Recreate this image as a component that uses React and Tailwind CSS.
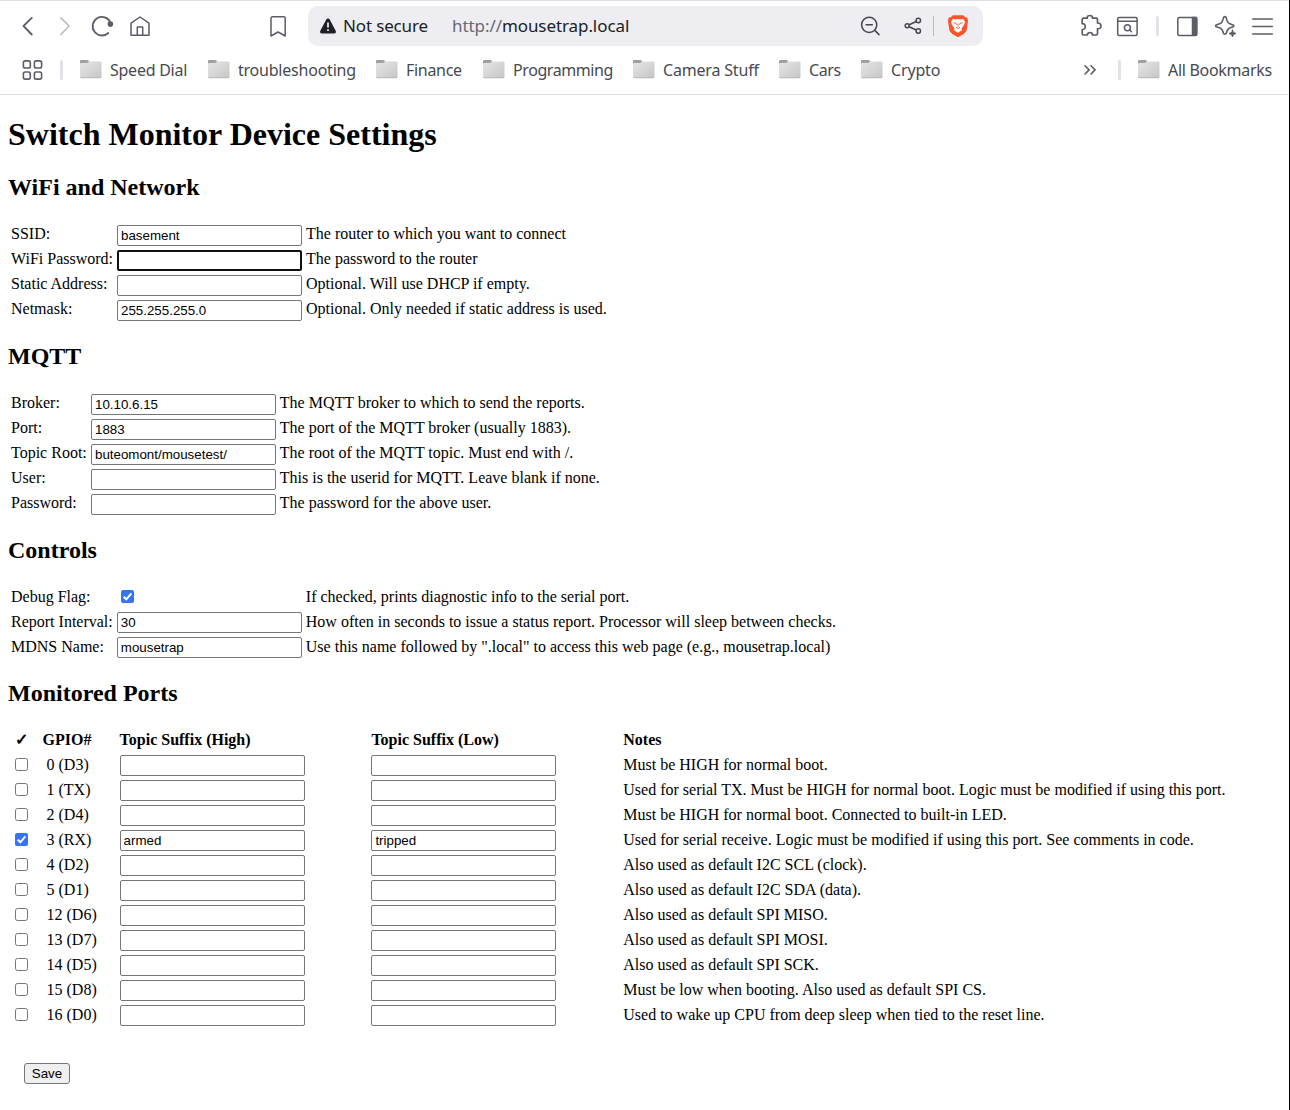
import React from "react";

const inputBase =
  "block h-[21px] w-[185px] rounded-[2px] bg-white font-['Liberation_Sans',Arial,sans-serif] text-[13.333px] text-black outline-none";

function Field({ value = "", focused = false, raised = false, label }) {
  return (
    <input
      aria-label={label}
      defaultValue={value}
      className={`${inputBase} ${raised ? "-mt-px" : ""} ${
        focused
          ? "border-2 border-[#101010] px-[2px] py-0 leading-[17px]"
          : "border border-[#767676] px-[3px] py-0 leading-[19px]"
      }`}
    />
  );
}

function Check({ on = false }) {
  return on ? (
    <svg viewBox="0 0 13 13" className="block size-[13px]">
      <rect width="13" height="13" rx="2" fill="#3574f7" />
      <path d="M2.7 6.7 5.3 9.3 10.4 3.4" fill="none" stroke="#fff" strokeWidth="2" />
    </svg>
  ) : (
    <span className="block size-[13px] rounded-[2.5px] border border-[#767676] bg-white" />
  );
}

function H2({ children }) {
  return <h2 className="h-[51px] text-[24px] leading-[27px] font-bold">{children}</h2>;
}

function Rows({ rows, cols, raised }) {
  return rows.map(([label, value, note, kind]) => (
    <div key={label} className={`grid h-[25px] items-start pl-[3px] whitespace-nowrap ${cols}`}>
      <span>{label}</span>
      {kind === "check" ? (
        <span className="pt-[2px] pl-[4px]"><Check on /></span>
      ) : (
        <Field label={label} value={value} focused={kind === "focus"} raised={raised} />
      )}
      <span>{note}</span>
    </div>
  ));
}

const wifi = [
  ["SSID:", "basement", "The router to which you want to connect"],
  ["WiFi Password:", "", "The password to the router", "focus"],
  ["Static Address:", "", "Optional. Will use DHCP if empty."],
  ["Netmask:", "255.255.255.0", "Optional. Only needed if static address is used."],
];
const mqtt = [
  ["Broker:", "10.10.6.15", "The MQTT broker to which to send the reports."],
  ["Port:", "1883", "The port of the MQTT broker (usually 1883)."],
  ["Topic Root:", "buteomont/mousetest/", "The root of the MQTT topic. Must end with /."],
  ["User:", "", "This is the userid for MQTT. Leave blank if none."],
  ["Password:", "", "The password for the above user."],
];
const controls = [
  ["Debug Flag:", "", "If checked, prints diagnostic info to the serial port.", "check"],
  ["Report Interval:", "30", "How often in seconds to issue a status report. Processor will sleep between checks."],
  ["MDNS Name:", "mousetrap", 'Use this name followed by ".local" to access this web page (e.g., mousetrap.local)'],
];
const ports = [
  ["0 (D3)", "Must be HIGH for normal boot."],
  ["1 (TX)", "Used for serial TX. Must be HIGH for normal boot. Logic must be modified if using this port."],
  ["2 (D4)", "Must be HIGH for normal boot. Connected to built-in LED."],
  ["3 (RX)", "Used for serial receive. Logic must be modified if using this port. See comments in code.", "armed", "tripped"],
  ["4 (D2)", "Also used as default I2C SCL (clock)."],
  ["5 (D1)", "Also used as default I2C SDA (data)."],
  ["12 (D6)", "Also used as default SPI MISO."],
  ["13 (D7)", "Also used as default SPI MOSI."],
  ["14 (D5)", "Also used as default SPI SCK."],
  ["15 (D8)", "Must be low when booting. Also used as default SPI CS."],
  ["16 (D0)", "Used to wake up CPU from deep sleep when tied to the reset line."],
];

function Icon({ className, children, w = 24, h = 24, sw = 1.5, color = "#5b5e66" }) {
  return (
    <svg width={w} height={h} viewBox={`0 0 ${w} ${h}`} fill="none" stroke={color} strokeWidth={sw} strokeLinecap="round" strokeLinejoin="round" className={`block shrink-0 ${className || ""}`}>
      {children}
    </svg>
  );
}

function Folder() {
  return (
    <svg width="24" height="20" viewBox="0 0 24 20" className="mb-[2px] block shrink-0">
      <defs>
        <linearGradient id="folder" x1="0" y1="0" x2="1" y2="1">
          <stop offset="0" stopColor="#e6e6e6" />
          <stop offset="1" stopColor="#c6c6c6" />
        </linearGradient>
      </defs>
      <path d="M1 8V2.2Q1 1 2.2 1H8.5Q9.3 1 9.8 2L10.3 3H20V8Z" fill="#a0a0a0" />
      <path d="M1 5Q1 4 2 4H8L10 2.6H21.5Q22.5 2.6 22.5 3.6V17.5Q22.5 19 21 19H2.5Q1 19 1 17.5Z" fill="url(#folder)" />
      <path d="M1.4 17.9Q1.7 18.8 2.6 18.8H21Q22 18.8 22.2 17.8" fill="none" stroke="#b0b0b0" strokeWidth=".8" />
    </svg>
  );
}

const bookmarks = [
  ["Speed Dial", "w-[128px]", "tracking-[-0.25px]"],
  ["troubleshooting", "w-[168px]", "tracking-[-0.22px]"],
  ["Finance", "w-[107px]", "tracking-[-0.3px]"],
  ["Programming", "w-[150px]", "tracking-[-0.42px]"],
  ["Camera Stuff", "w-[146px]", "tracking-[-0.18px]"],
  ["Cars", "w-[82px]", "tracking-[-0.4px]"],
  ["Crypto", "w-[100px]", "tracking-[-0.15px]"],
];

function Browser() {
  return (
    <header className="h-[95px] border-t border-b border-[#dfdfe4] bg-white font-['Noto_Sans','Open_Sans',sans-serif] whitespace-nowrap">
      <div className="flex h-[50px] items-center">
        <Icon className="ml-[16px]" sw={1.8}><path d="M15.8 3.8 7.5 12 15.8 20.5" /></Icon>
        <Icon className="ml-[13px]" color="#bdbdbd" sw={1.7}><path d="M7.8 3.8 16.1 12 7.8 20.5" /></Icon>
        <Icon className="ml-[13px]" w={26} sw={1.8}>
          <path d="M18.3 19A9.3 9.3 0 1 1 20.4 8.3" />
          <circle cx="20.4" cy="10.1" r="1.9" fill="#5b5e66" />
        </Icon>
        <Icon className="ml-[12px]">
          <path d="M3 9.2 12 3l9 6.2V21.2H3ZM9.3 21V13h5.4V21" />
        </Icon>
        <Icon className="ml-[114px]"><path d="M6.2 2.7H17.7Q19.2 2.7 19.2 4.2V22L12.1 18 5 22V4.2Q5 2.7 6.5 2.7Z" /></Icon>
        <div className="ml-[18px] flex h-[40px] w-[675px] items-center rounded-[10px] bg-[#ededf2] text-[17px]">
          <svg width="18" height="16" viewBox="0 0 18 16" className="ml-[11px] shrink-0">
            <path d="M7.4 1.2Q9 -.4 10.6 1.2L16.8 13Q17.4 15.2 15.4 15.4H2.6Q.6 15.2 1.2 13Z" fill="#202126" />
            <path d="M9 4.5V9.5M9 11.2V13" stroke="#fff" strokeWidth="1.6" />
          </svg>
          <span className="ml-[6px] w-[109px] tracking-[-0.15px] text-[#202126]">Not secure</span>
          <span className="w-[406px] tracking-[-0.08px] text-[#202126]"><span className="text-[#676970]">http://</span>mousetrap.local</span>
          <Icon color="#46484f">
            <circle cx="11.2" cy="10.8" r="7.6" /><path d="m16.8 16.4 4.2 4.2M8.1 10.8h6.2" />
          </Icon>
          <Icon className="ml-[21px]" color="#46484f" w={22}>
            <circle cx="4.2" cy="11.7" r="2" /><circle cx="15.3" cy="6.5" r="2.2" /><circle cx="15.3" cy="17" r="2.2" />
            <path d="M6.2 10.8 13.2 7.5M6.2 12.7l7 3.3" />
          </Icon>
          <span className="ml-[8px] h-[20px] w-px bg-[#b9bbc3]" />
          <svg width="20" height="24" viewBox="0 0 20 24" className="ml-[14px] shrink-0">
            <path d="M4.8 1.2H15.2L17.2 3.2 19.3 3.6 20 7 18.6 16.5Q17 20 10 23.2 3 20 1.4 16.5L0 7 .7 3.6 2.8 3.2Z" fill="#fb542b" />
            <path d="M5 4.8 7.2 5.4 10 4.9 12.8 5.4 15 4.8 17 7.8 16.3 10.3 13.7 14.2 13.9 16.2 10 18.8 6.1 16.2 6.3 14.2 3.7 10.3 3 7.8Z" fill="#fff" />
            <path d="M5.6 8.7 8 9.3 8.4 10.8M14.4 8.7 12 9.3 11.6 10.8M10 9.5V12.7M8 13.2 10 14.7 12 13.2" fill="none" stroke="#fb542b" strokeWidth=".9" />
          </svg>
        </div>
        <Icon className="ml-[96px]" w={24} sw={1.7}>
          <path d="M3.2 5.5Q3.2 4.2 4.5 4.2H8.2Q8 1.5 10.8 1.5T13.5 4.2H17.3Q18.5 4.2 18.5 5.5V9Q22 9 22 12T18.5 14.8V19.7Q18.5 21 17.3 21H13.5Q13.5 18.5 11 18.5T8.4 21H4.5Q3.2 21 3.2 19.7V15.5Q6.3 15.5 6.3 12.5T3.2 9.7Z" />
        </Icon>
        <Icon className="ml-[13px]">
          <rect x="1.7" y="3.4" width="19.4" height="18" rx="1.5" /><path d="M2 7.2H21" />
          <circle cx="11.4" cy="13.7" r="3" /><path d="m13.7 16 1.7 1.7" />
        </Icon>
        <span className="ml-[16px] h-[20px] w-[3px] rounded bg-[#e2e2e9]" />
        <Icon className="ml-[17px]">
          <rect x="1.8" y="3.4" width="19" height="18" rx="1.5" /><path d="M16.5 3.6H20.5V21.1H16.5Z" fill="#5b5e66" />
        </Icon>
        <Icon className="ml-[14px]" sw={1.6}>
          <path d="M10.8 2.6Q11.9 2.6 12.2 3.7 13.2 8.6 15.3 9.6L19.2 11Q20.5 11.7 19.2 12.8L15.5 14.1Q13.3 15.2 12.2 19.5 10.8 21 9.6 19.5 8.5 15.2 6.3 14.1L2.2 12.8Q1 11.7 2.2 11L6.3 9.6Q8.5 8.6 9.5 3.7 9.8 2.6 10.8 2.6Z" />
          <path d="m18.5 16 .9 2.5 2.6 1-2.6 1-.9 2.5-.9-2.5-2.6-1 2.6-1Z" fill="#5b5e66" strokeWidth="1" />
        </Icon>
        <Icon className="ml-[13px]"><path d="M1.7 5H21.3M1.7 12.5H21.3M1.7 20H21.3" /></Icon>
      </div>
      <div className="flex h-[38px] items-center text-[16px] text-[#47494f]">
        <Icon className="ml-[21px]" sw={1.6}>
          <rect x="2.4" y="2.9" width="6.9" height="7.1" rx="1.8" /><rect x="13.4" y="2.9" width="7.2" height="7.1" rx="1.8" />
          <rect x="2.4" y="14" width="6.9" height="7.1" rx="1.8" /><rect x="13.4" y="14" width="7.2" height="7.1" rx="1.8" />
        </Icon>
        <span className="mr-[16px] ml-[15px] h-[20px] w-[3px] rounded bg-[#e2e2e9]" />
        {bookmarks.map(([name, width, tracking]) => (
          <div key={name} className={`flex shrink-0 items-center ${width}`}>
            <Folder />
            <span className={`ml-[7px] ${tracking}`}>{name}</span>
          </div>
        ))}
        <Icon className="ml-[118px]" sw={1.6}><path d="m7 7.8 4.1 4.1L7 16M13 7.8l4.1 4.1L13 16" /></Icon>
        <span className="mr-[16px] ml-[16px] h-[20px] w-[3px] rounded bg-[#e2e2e9]" />
        <Folder />
        <span className="ml-[7px] tracking-[-0.3px]">All Bookmarks</span>
      </div>
    </header>
  );
}

export default function App() {
  const portCols = "grid-cols-[31.5px_77.1px_251.8px_251.9px_auto]";
  return (
    <div className="h-[1110px] overflow-hidden border-r border-black bg-white">
      <Browser />
      <main className="pt-[21px] pl-[8px] font-['Liberation_Serif','Times_New_Roman',serif] text-[16px] leading-[18px] text-black">
        <h1 className="h-[58px] text-[32px] leading-[37px] font-bold">Switch Monitor Device Settings</h1>
        <section className="h-[169px]">
          <H2>WiFi and Network</H2>
          <Rows rows={wifi} cols="grid-cols-[106px_189px_auto]" />
        </section>
        <section className="h-[194px]">
          <H2>MQTT</H2>
          <Rows rows={mqtt} cols="grid-cols-[80px_188.8px_auto]" />
        </section>
        <section className="h-[143px]">
          <H2>Controls</H2>
          <Rows rows={controls} cols="grid-cols-[105.8px_189px_auto]" raised />
        </section>
        <section>
          <H2>Monitored Ports</H2>
          <div className={`grid h-[25px] pl-[3px] font-bold ${portCols}`}>
            <span className="pl-[4px]">✓</span>
            <span>GPIO#</span>
            <span>Topic Suffix (High)</span>
            <span>Topic Suffix (Low)</span>
            <span>Notes</span>
          </div>
          {ports.map(([gpio, note, high, low]) => (
            <div key={gpio} className={`grid h-[25px] items-start pl-[3px] whitespace-nowrap ${portCols}`}>
              <span className="pt-[2px] pl-[4px]"><Check on={Boolean(high)} /></span>
              <span className="pl-[4px]">{gpio}</span>
              <Field label={`${gpio} high`} value={high} raised />
              <Field label={`${gpio} low`} value={low} raised />
              <span>{note}</span>
            </div>
          ))}
          <button className="mt-[32px] ml-[16px] block h-[21px] w-[46px] rounded-[3px] border border-[#767676] bg-[#efefef] font-['Liberation_Sans',Arial,sans-serif] text-[13.333px] leading-[19px]">Save</button>
        </section>
      </main>
    </div>
  );
}
